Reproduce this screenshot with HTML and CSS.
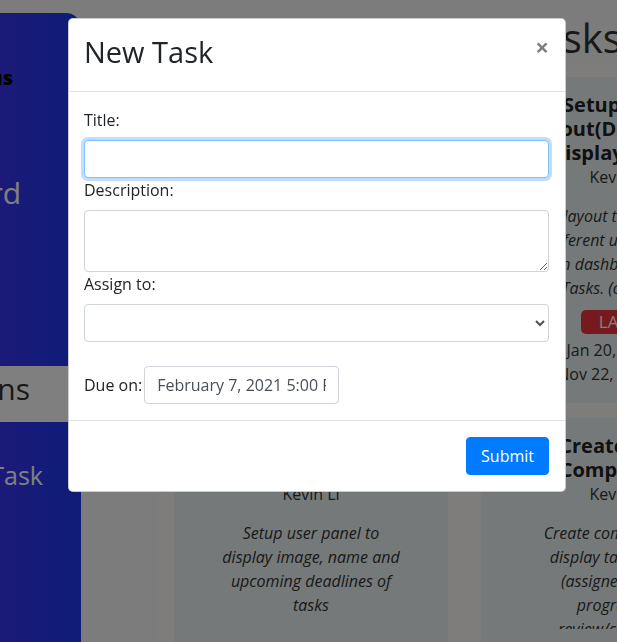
FILE: index.html
```html
<!DOCTYPE html>
<html lang="en">
<head>
<meta charset="utf-8">
<title>Tasks</title>
<link rel="stylesheet" href="styles.css">
</head>
<body>
<div class="app">
  <aside class="sidebar">
    <div class="brand"><span>Taskus</span></div>
    <nav class="nav">
      <a class="nav-item nav-dashboard"><span>Dashboard</span></a>
      <a class="nav-item nav-active"><span>My Actions</span></a>
      <a class="nav-item nav-add"><span>Add Task</span></a>
    </nav>
  </aside>
  <main class="main">
    <h1 class="page-title">My Tasks</h1>
    <div class="board">
      <div class="card">
        <h3 class="card-title">Setup Login<br>Page<br>Authentication</h3>
        <div class="card-owner">Kevin Li</div>
        <div class="card-desc">Setup login page to<br>authenticate users<br>before accessing the<br>dashboard.</div>
        <div class="badge">LATE</div>
        <div class="card-date first">Set on Jan 18, 2021 5:00 PM</div>
        <div class="card-date">Due on Nov 20, 2020 at 5:00 PM</div>
      </div>
      <div class="card">
        <h3 class="card-title">Setup Base<br>Layout(Dashboard<br>display) Page</h3>
        <div class="card-owner">Kevin Li</div>
        <div class="card-desc">Setup layout to differentiate<br>different users' views<br>on dashboard and<br>Tasks. (ongoing)</div>
        <div class="badge">LATE</div>
        <div class="card-date first">Set on Jan 20, 2021 5:00 PM</div>
        <div class="card-date">Due on Nov 22, 2020 at 5:00 PM</div>
      </div>
      <div class="card">
        <h3 class="card-title">Setup User<br>Panel</h3>
        <div class="card-owner">Kevin Li</div>
        <div class="card-desc">Setup user panel to<br>display image, name and<br>upcoming deadlines of<br>tasks</div>
      </div>
      <div class="card">
        <h3 class="card-title">Create Task<br>Component</h3>
        <div class="card-owner">Kevin Li</div>
        <div class="card-desc">Create component to<br>display tasks based<br>(assigned, in the<br>progress, in<br>review/complete)</div>
      </div>
    </div>
  </main>
</div>

<div class="backdrop"></div>

<div class="modal">
  <div class="modal-header">
    <h3 class="modal-title">New Task</h3>
    <button class="close" type="button">&times;</button>
  </div>
  <form class="modal-body">
    <label class="form-label" for="title">Title:</label>
    <input class="form-control is-focused" id="title" type="text">
    <label class="form-label" for="desc">Description:</label>
    <textarea class="form-control form-textarea" id="desc" rows="2"></textarea>
    <label class="form-label" for="assign">Assign to:</label>
    <select class="form-control form-select" id="assign">
      <option></option>
    </select>
    <div class="due-row">
      <label class="due-label" for="due">Due on:</label>
      <input class="form-control due-input" id="due" type="text" value="February 7, 2021 5:00 PM">
    </div>
  </form>
  <div class="modal-footer">
    <button class="btn-primary" type="button">Submit</button>
  </div>
</div>
</body>
</html>
```

FILE: styles.css
```css
html, body {
  margin: 0;
  padding: 0;
}
body {
  width: 617px;
  height: 642px;
  overflow: hidden;
  background: #f6f8f6;
  font-family: "Open Sans", "Liberation Sans", sans-serif;
  font-size: 16px;
  line-height: 24px;
  color: #333;
  position: relative;
}

/* ---------- page underneath ---------- */
.app {
  display: flex;
  align-items: flex-start;
}
.sidebar {
  flex: 0 0 81px;
  width: 81px;
  height: 629px;
  margin-top: 13px;
  background: linear-gradient(90deg, #3834f2, #1a3af0);
  border-top-right-radius: 15px;
  overflow: hidden;
}
.brand {
  display: flex;
  justify-content: flex-end;
  margin-top: 53px;
  padding-right: 68px;
  font-size: 20px;
  font-weight: 800;
  line-height: 24px;
  color: #000;
  white-space: nowrap;
}
.nav {
  display: flex;
  flex-direction: column;
}
.nav-item {
  display: flex;
  justify-content: flex-end;
  align-items: center;
  height: 56px;
  font-size: 30px;
  color: #fff;
  white-space: nowrap;
}
.nav-dashboard {
  margin-top: 75px;
  padding-right: 60px;
}
.nav-active {
  margin-top: 145px;
  padding-right: 51px;
  padding-bottom: 10px;
  height: 46px;
  background: #fff;
  color: #333;
}
.nav-add {
  margin-top: 25px;
  padding-right: 38px;
  font-size: 25px;
}

.main {
  flex: 1 0 auto;
  padding-left: 76px;
}
.page-title {
  margin: 0;
  padding: 14px 0 0 295px;
  font-size: 40px;
  line-height: 48px;
  font-weight: 500;
  color: #333;
  white-space: nowrap;
}
.board {
  display: grid;
  grid-template-columns: 274px 274px;
  gap: 15px 33px;
  padding: 15px 17px;
  background: #fff8f8;
  width: max-content;
}
.card {
  background: #ecf2f2;
  padding: 16px 10px 17px;
  text-align: center;
}
.card-title {
  margin: 0;
  font-size: 20px;
  line-height: 24px;
  font-weight: 700;
  color: #222;
}
.card-owner {
  font-size: 16px;
  line-height: 24px;
}
.card-desc {
  margin-top: 15px;
  font-style: italic;
  line-height: 24px;
  max-height: 108px;
  overflow: hidden;
}
.badge {
  display: inline-block;
  margin-top: 10px;
  padding: 0 18px;
  height: 24px;
  line-height: 24px;
  font-size: 17px;
  font-weight: 500;
  background: #ee3440;
  color: #fff;
  border-radius: 5px;
}
.card-date {
  line-height: 24px;
  white-space: nowrap;
}
.card-date.first {
  margin-top: 4px;
}

/* ---------- modal ---------- */
.backdrop {
  position: fixed;
  inset: 0;
  background: rgba(0, 0, 0, 0.5);
}
.modal {
  position: absolute;
  left: 68px;
  top: 18px;
  width: 498px;
  box-sizing: border-box;
  background: #fff;
  border: 1px solid rgba(0, 0, 0, 0.2);
  border-radius: 5px;
  color: #212529;
}
.modal-header {
  display: flex;
  align-items: flex-start;
  justify-content: space-between;
  padding: 16px;
  border-bottom: 1px solid #dee2e6;
}
.modal-title {
  margin: 0 0 6px -1px;
  font-size: 29px;
  line-height: 34px;
  font-weight: 400;
  color: #212529;
}
.close {
  margin: -16px -16px -16px auto;
  padding: 16px;
  background: transparent;
  border: 0;
  font-family: "Open Sans", sans-serif;
  font-size: 24px;
  font-weight: 700;
  line-height: 24px;
  color: #000;
  opacity: 0.5;
}
.modal-body {
  display: block;
  margin: 0;
  padding: 16px 16px 16px 15px;
}
.form-label {
  display: block;
  margin-bottom: 8px;
  font-size: 16px;
  line-height: 24px;
  color: #212529;
}
.form-control {
  display: block;
  width: 100%;
  height: 38px;
  box-sizing: border-box;
  margin: 0;
  padding: 6px 12px;
  font-family: "Open Sans", sans-serif;
  font-size: 16px;
  line-height: 24px;
  color: #495057;
  background: #fff;
  border: 1px solid #ced4da;
  border-radius: 4px;
  outline: none;
}
.is-focused {
  border-color: #80bdff;
  box-shadow: 0 0 0 3px rgba(0, 123, 255, 0.25);
}
.form-textarea {
  height: 62px;
}
.due-row {
  display: flex;
  align-items: center;
  gap: 2px;
  margin-top: 24px;
}
.due-label {
  font-size: 16px;
  line-height: 24px;
  color: #212529;
  white-space: nowrap;
}
.due-input {
  width: 195px;
  flex: 0 0 195px;
}
.modal-footer {
  display: flex;
  justify-content: flex-end;
  padding: 12px;
  border-top: 1px solid #dee2e6;
}
.btn-primary {
  margin: 4px;
  height: 38px;
  padding: 6px 14px;
  font-family: "Open Sans", sans-serif;
  font-size: 16px;
  line-height: 24px;
  color: #fff;
  background: #007bff;
  border: 1px solid #007bff;
  border-radius: 4px;
}
```
